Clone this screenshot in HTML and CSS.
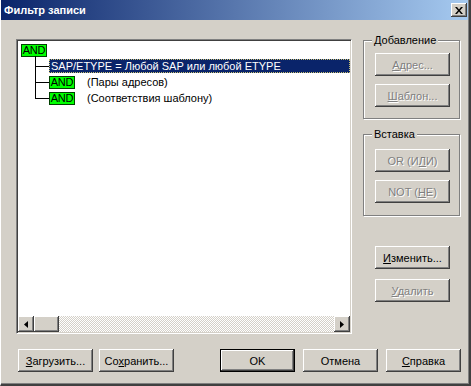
FILE: index.html
```html
<!DOCTYPE html>
<html lang="ru">
    <head>
        <meta charset="UTF-8">
        <title>Фильтр записи</title>
        <link rel="stylesheet" href="styles.css">
    </head>
    <body>
        <div class="window">
            <div class="titlebar">
                <span class="title">Фильтр записи</span>
                <span class="close">
                    <svg width="8" height="7" viewBox="0 0 8 7">
                        <path d="M0 0h2l2 2.5L6 0h2L5 3.5 8 7H6L4 4.5 2 7H0l3-3.5z" fill="#000"/>
                    </svg>
                </span>
            </div>

            <div class="content">
                <div class="main">
                    <div class="listbox">
                        <div class="tree">
                            <div class="row root"><span class="tag">AND</span></div>
                            <div class="children">
                                <div class="row">
                                    <span class="branch"></span>
                                    <span class="item selected">SAP/ETYPE = Любой SAP или любой ETYPE</span>
                                </div>
                                <div class="row">
                                    <span class="branch"></span>
                                    <span class="tag">AND</span>
                                    <span class="note">(Пары адресов)</span>
                                </div>
                                <div class="row">
                                    <span class="branch"></span>
                                    <span class="tag">AND</span>
                                    <span class="note">(Соответствия шаблону)</span>
                                </div>
                            </div>
                        </div>
                        <div class="hscroll">
                            <span class="sbtn">
                                <svg width="4" height="7" viewBox="0 0 4 7"><path d="M4 0v7L0 3.5z" fill="#000"/></svg>
                            </span>
                            <span class="thumb"></span>
                            <span class="track"></span>
                            <span class="sbtn">
                                <svg width="4" height="7" viewBox="0 0 4 7"><path d="M0 0v7l4-3.5z" fill="#000"/></svg>
                            </span>
                        </div>
                    </div>

                    <div class="side">
                        <div class="group first">
                            <span class="legend">Добавление</span>
                            <button type="button" class="btn" disabled><u>А</u>дрес...</button>
                            <button type="button" class="btn" disabled><u>Ш</u>аблон...</button>
                        </div>
                        <div class="group second">
                            <span class="legend">Вставка</span>
                            <button type="button" class="btn" disabled>OR (И<u>Л</u>И)</button>
                            <button type="button" class="btn" disabled>NOT (<u>Н</u>Е)</button>
                        </div>
                        <button type="button" class="btn edit"><u>И</u>зменить...</button>
                        <button type="button" class="btn remove" disabled><u>У</u>далить</button>
                    </div>
                </div>

                <div class="footer">
                    <div class="left-buttons">
                        <button type="button" class="btn"><u>З</u>агрузить...</button>
                        <button type="button" class="btn">Со<u>х</u>ранить...</button>
                    </div>
                    <div class="right-buttons">
                        <button type="button" class="btn default">OK</button>
                        <button type="button" class="btn">Отмена</button>
                        <button type="button" class="btn"><u>С</u>правка</button>
                    </div>
                </div>
            </div>
        </div>
    </body>
</html>
```

FILE: styles.css
```css
body {
    margin: 0;
    padding: 0;
    font-family: "Liberation Sans", Arial, sans-serif;
    font-size: 11px;
    background-color: #d4d0c8;
}

.window {
    width: 471px;
    height: 386px;
    box-sizing: border-box;
    background-color: #d4d0c8;
    border-left: 1px solid #fff;
    border-right: 2px solid #404040;
    border-bottom: 2px solid #404040;
    box-shadow: inset -1px -1px #808080;
    display: flex;
    flex-direction: column;
}

.titlebar {
    height: 20px;
    margin-right: 1px;
    background: linear-gradient(to right, #0a246a, #a6caf0);
    display: flex;
    align-items: center;
    justify-content: space-between;
    padding-left: 3px;
}

.title {
    color: #fff;
    font-weight: bold;
    font-size: 11px;
}

.close {
    width: 16px;
    height: 14px;
    margin-right: 1px;
    background-color: #d4d0c8;
    box-shadow: inset -1px -1px #404040, inset 1px 1px #fff, inset -2px -2px #808080;
    display: flex;
    align-items: center;
    justify-content: center;
}

.content {
    flex: 1;
    display: flex;
    flex-direction: column;
}

.main {
    display: flex;
    padding-top: 19px;
    padding-left: 15px;
}

/* tree list */
.listbox {
    width: 336px;
    height: 295px;
    box-sizing: border-box;
    border-top: 1px solid #808080;
    border-left: 1px solid #808080;
    border-right: 1px solid #fff;
    border-bottom: 1px solid #fff;
    box-shadow: inset 1px 1px #404040, inset -1px -1px #d4d0c8;
    padding: 1px;
    background-color: #fff;
    display: flex;
    flex-direction: column;
}

.tree {
    flex: 1;
    padding: 1px 0 0 3px;
}

.row {
    height: 16px;
    display: flex;
    align-items: center;
}

.tag {
    width: 26px;
    height: 13px;
    box-sizing: border-box;
    border: 1px solid #004000;
    background-color: #00ff00;
    color: #000;
    line-height: 11px;
    text-align: center;
    font-size: 11px;
    letter-spacing: -0.3px;
}

.children {
    margin-left: 14px;
    position: relative;
}

.children::before {
    content: "";
    position: absolute;
    left: 0;
    top: -2px;
    bottom: 8px;
    width: 1px;
    background-color: #000;
}

.branch {
    width: 14px;
    height: 1px;
    background-color: #000;
}

.item {
    flex: 1;
    height: 14px;
    line-height: 12px;
    box-sizing: border-box;
    padding-left: 1px;
}

.selected {
    background-color: #0a246a;
    color: #fff;
    border: 1px dotted #c8c070;
}

.note {
    margin-left: 12px;
}

.hscroll {
    height: 16px;
    display: flex;
}

.sbtn,
.thumb {
    height: 16px;
    background-color: #d4d0c8;
    box-shadow: inset -1px -1px #404040, inset 1px 1px #fff, inset -2px -2px #808080;
}

.sbtn {
    width: 16px;
    display: flex;
    align-items: center;
    justify-content: center;
}

.thumb {
    width: 25px;
}

.track {
    flex: 1;
    background-image: repeating-conic-gradient(#fff 0 25%, #d4d0c8 0 50%);
    background-size: 2px 2px;
}

/* right column */
.side {
    margin-left: 11px;
    width: 97px;
    display: flex;
    flex-direction: column;
}

.group {
    position: relative;
    border: 1px solid #808080;
    box-shadow: inset 1px 1px #fff, 1px 1px #fff;
    display: flex;
    flex-direction: column;
    gap: 8px;
    padding-left: 11px;
}

.group.first {
    margin-top: 1px;
    padding-top: 12px;
    padding-bottom: 11px;
}

.group.second {
    margin-top: 15px;
    padding-top: 14px;
    padding-bottom: 12px;
}

.legend {
    position: absolute;
    top: -8px;
    left: 8px;
    padding: 0 2px;
    background-color: #d4d0c8;
    line-height: 14px;
}

.side > .btn {
    margin-left: 12px;
}

.edit {
    margin-top: 30px;
}

.remove {
    margin-top: 10px;
}

/* buttons */
.btn {
    width: 75px;
    height: 23px;
    padding: 0;
    border: none;
    background-color: #d4d0c8;
    box-shadow: inset -1px -1px #404040, inset 1px 1px #fff, inset -2px -2px #808080;
    font-family: "Liberation Sans", Arial, sans-serif;
    font-size: 11px;
    color: #000;
}

.btn:disabled {
    color: #808080;
    text-shadow: 1px 1px #fff;
}

.btn.default {
    box-shadow: inset 0 0 0 1px #000, inset -2px -2px #404040, inset 2px 2px #fff, inset -3px -3px #808080;
}

.footer {
    display: flex;
    justify-content: space-between;
    padding: 15px 8px 0 17px;
}

.left-buttons,
.right-buttons {
    display: flex;
}

.left-buttons {
    gap: 6px;
}

.right-buttons {
    gap: 8px;
}
```
